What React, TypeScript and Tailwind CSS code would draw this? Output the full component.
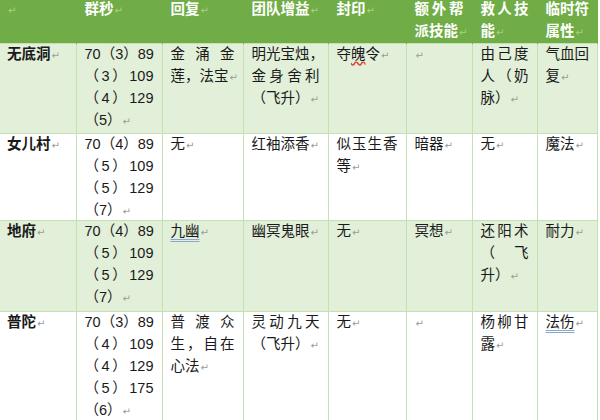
import type { ReactNode } from "react";

const COLS = [76, 86, 81, 85, 78, 66, 65, 60];

type Cell = ReactNode[];

function Mark({ head }: { head?: boolean }) {
  return (
    <span
      className={
        "ml-[1px] text-[10px] font-normal leading-[0] " +
        (head ? "text-[#a9d18e]" : "text-[#9b9b9b]")
      }
      style={{ fontFamily: '"DejaVu Sans", sans-serif' }}
    >
      ↵
    </span>
  );
}

function Lines({ lines, head }: { lines: Cell; head?: boolean }) {
  return (
    <>
      {lines.map((line, i) => {
        const last = i === lines.length - 1;
        return (
          <div
            key={i}
            className={
              "h-[22px] whitespace-nowrap " +
              (last ? "text-left" : "text-justify [text-align-last:justify]")
            }
          >
            {line}
            {last && <Mark head={head} />}
          </div>
        );
      })}
    </>
  );
}

const HEAD: Cell[] = [
  [""],
  ["群秒"],
  ["回复"],
  ["团队增益"],
  ["封印"],
  ["额外帮", "派技能"],
  ["救人技", "能"],
  ["临时符", "属性"],
];

const grammar = (t: string) => (
  <span className="underline decoration-double decoration-[#8aa6cf] underline-offset-[3px]">
    {t}
  </span>
);

const ROWS: { h: string; green: boolean; cells: Cell[] }[] = [
  {
    h: "h-[90px]",
    green: true,
    cells: [
      ["无底洞"],
      ["70（3）89", "（3）109", "（4）129", "（5）"],
      ["金涌金", "莲，法宝"],
      ["明光宝烛，", "金身舍利", "（飞升）"],
      [
        <>
          夺<span className="underline decoration-wavy decoration-[#e0403a] underline-offset-[2px]">魄</span>令
        </>,
      ],
      [""],
      ["由己度", "人（奶", "脉）"],
      ["气血回", "复"],
    ],
  },
  {
    h: "h-[87px]",
    green: false,
    cells: [
      ["女儿村"],
      ["70（4）89", "（5）109", "（5）129", "（7）"],
      ["无"],
      ["红袖添香"],
      ["似玉生香", "等"],
      ["暗器"],
      ["无"],
      ["魔法"],
    ],
  },
  {
    h: "h-[91px]",
    green: true,
    cells: [
      ["地府"],
      ["70（4）89", "（5）109", "（5）129", "（7）"],
      [grammar("九幽")],
      ["幽冥鬼眼"],
      ["无"],
      ["冥想"],
      ["还阳术", "（飞", "升）"],
      ["耐力"],
    ],
  },
  {
    h: "h-[118px]",
    green: false,
    cells: [
      ["普陀"],
      ["70（3）89", "（4）109", "（4）129", "（5）175", "（6）"],
      ["普渡众", "生，自在", "心法"],
      ["灵动九天", "（飞升）"],
      ["无"],
      [""],
      ["杨柳甘", "露"],
      [grammar("法伤")],
    ],
  },
];

export default function App() {
  return (
    <div
      className="h-[420px] w-[600px] overflow-hidden bg-white text-[14.5px] leading-[22px] text-[#1a1a1a]"
      style={{ fontFamily: '"Liberation Sans", "Noto Sans CJK SC", sans-serif' }}
    >
      <table className="table-fixed border-collapse" style={{ width: 597 }}>
        <colgroup>
          {COLS.map((w, i) => (
            <col key={i} style={{ width: w }} />
          ))}
        </colgroup>
        <thead>
          <tr className="bg-[#70ad47]">
            {HEAD.map((c, i) => (
              <th
                key={i}
                className={
                  "border-r border-[#70ad47] p-0 pr-2 align-top font-bold text-white " +
                  (i === 0 ? "pl-[7px]" : "pl-2")
                }
              >
                <div className="h-[45px] -mt-[2px]">
                  <Lines lines={c} head />
                </div>
              </th>
            ))}
          </tr>
        </thead>
        <tbody>
          {ROWS.map((r, ri) => (
            <tr key={ri} className={r.green ? "bg-[#e2efd9]" : "bg-white"}>
              {r.cells.map((c, i) => (
                <td
                  key={i}
                  className={
                    "border border-[#c5e0b3] p-0 pr-2 align-top " +
                    (i === 0 ? "border-l-0 pl-[7px] font-bold" : "pl-2")
                  }
                >
                  <div className={r.h + " -mt-[1px]"}>
                    <Lines lines={c} />
                  </div>
                </td>
              ))}
            </tr>
          ))}
        </tbody>
      </table>
    </div>
  );
}
